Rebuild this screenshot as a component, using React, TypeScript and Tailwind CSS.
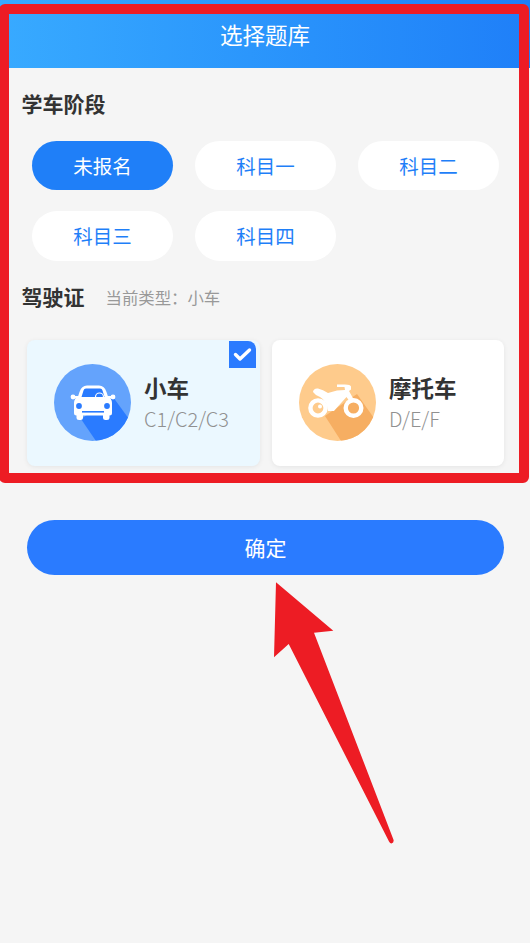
const CJK = 'font-["Noto_Sans_CJK_SC","Noto_Sans",sans-serif]'

const stages = ['未报名', '科目一', '科目二', '科目三', '科目四']

function CarIcon() {
  return (
    <svg width="77" height="77" viewBox="0 0 77 77" className="shrink-0 mb-[2px]">
      <defs>
        <clipPath id="car-clip">
          <circle cx="38.5" cy="38.5" r="38.5" />
        </clipPath>
      </defs>
      <circle cx="38.5" cy="38.5" r="38.5" fill="#64a3fc" />
      <polygon points="59,33 80,62 60,90 44,80 27,55" fill="#2a7bff" clipPath="url(#car-clip)" />
      {/* car */}
      <path
        d="M25.5 28 Q27.5 21.5 33 21.5 H45 Q50.5 21.5 52.5 28 L54 32.5 Q58 34.5 58 39 V49 Q58 51.5 55.5 51.5 V54 Q55.5 56 53 56 H51.5 Q49 56 49 54 V51.5 H29 V54 Q29 56 26.5 56 H25 Q22.5 56 22.5 54 V51.5 Q20 51.5 20 49 V39 Q20 34.5 24 32.5 Z"
        fill="#fff"
      />
      <circle cx="19" cy="33" r="2.4" fill="#fff" />
      <circle cx="59" cy="33" r="2.4" fill="#fff" />
      <rect x="19" y="32" width="6" height="2.5" fill="#fff" />
      <rect x="53" y="32" width="6" height="2.5" fill="#fff" />
      <path d="M29.5 26.5 Q30 24.5 32 24.5 H46 Q48 24.5 48.5 26.5 L50.5 33 H27.5 Z" fill="#2a7bff" />
      <path d="M41.5 33 a4 4 0 0 1 8 0" fill="none" stroke="#fff" strokeWidth="1.2" />
      <circle cx="25" cy="42" r="2.9" fill="#2a7bff" />
      <circle cx="53" cy="42" r="2.9" fill="#2a7bff" />
      <rect x="28" y="47" width="22" height="1.6" fill="#2a7bff" />
    </svg>
  )
}

function MotoIcon() {
  return (
    <svg width="77" height="77" viewBox="0 0 77 77" className="shrink-0 mb-[2px]">
      <defs>
        <clipPath id="moto-clip">
          <circle cx="38.5" cy="38.5" r="38.5" />
        </clipPath>
      </defs>
      <circle cx="38.5" cy="38.5" r="38.5" fill="#fecb8c" />
      <polygon points="58,30 82,64 60,90 44,80 26,52" fill="#f6ae62" clipPath="url(#moto-clip)" />
      {/* bike */}
      <path
        d="M14 28 Q14.5 24 19 24.5 Q24 25.5 29 29 L38 26.5 L46 26 L45.5 23 H38 V20.5 H46 Q51.5 20.5 52 22.5 V25.5 L50 27 L55 36 L51 38 L47.5 33 Q42 39 35 47 H29 Q28 37 21 33 Q16 31 14 28 Z"
        fill="#fff"
      />
      <circle cx="19" cy="44" r="7.6" fill="none" stroke="#fff" strokeWidth="4.4" />
      <circle cx="21" cy="42.5" r="2" fill="#fff" />
      <circle cx="54.5" cy="44" r="7.8" fill="none" stroke="#fff" strokeWidth="4.4" />
      <circle cx="54.5" cy="43" r="2.4" fill="#f6ae62" />
    </svg>
  )
}

function LicenseCard({
  name,
  code,
  icon,
  active,
  className,
}: {
  name: string
  code: string
  icon: React.ReactNode
  active?: boolean
  className: string
}) {
  return (
    <div
      className={`relative h-[126px] flex items-center rounded-lg shadow-[0_1px_5px_rgba(0,0,0,0.07)] ${
        active ? 'bg-[#ebf8ff]' : 'bg-white'
      } ${className}`}
    >
      {icon}
      <div className="ml-[13px] mb-[3px] flex flex-col">
        <span className="text-[22.5px] leading-[32px] font-bold text-[#333]">{name}</span>
        <span className="text-[20px] leading-[28px] mt-[2px] text-[#909090] font-light">{code}</span>
      </div>
      {active && (
        <div className="absolute right-[4px] top-[1px] w-[27px] h-[27px] bg-[#2a7bff] rounded-tr-lg flex items-center justify-center">
          <svg width="19" height="15" viewBox="0 0 19 15">
            <path d="M2.5 7.5 L7 12 L16.5 3" fill="none" stroke="#fff" strokeWidth="3.4" strokeLinecap="round" strokeLinejoin="round" />
          </svg>
        </div>
      )}
    </div>
  )
}

export default function App() {
  return (
    <div className={`relative w-[530px] h-[943px] overflow-hidden bg-[#f5f5f5] ${CJK}`}>
      <div className="h-[68px] pt-[18.5px] bg-gradient-to-r from-[#38aaff] to-[#1f7ff8] text-center text-[22.5px] leading-[30px] text-white">
        选择题库
      </div>

      <div className="pl-[21.5px] pt-[19px] text-[21px] leading-[32px] font-bold text-[#333]">学车阶段</div>

      <div className="mt-[22px] px-[32px] grid grid-cols-[141px_141px_141px] grid-rows-[49px_50px] gap-x-[22px] gap-y-[21px]">
        {stages.map((s, i) => (
          <button
            key={s}
            className={`rounded-full text-[19.5px] ${
              i === 0 ? 'bg-[#1f7ff8] text-white' : 'bg-white text-[#1f7ff8]'
            }`}
          >
            {s}
          </button>
        ))}
      </div>

      <div className="mt-[20px] pl-[21.5px] flex items-center h-[32px]">
        <span className="text-[21px] font-bold text-[#333]">驾驶证</span>
        <span className="ml-[21px] text-[16.4px] text-[#999]">当前类型：小车</span>
      </div>

      <div className="mt-[27px] pl-[27px] flex gap-[12px]">
        <LicenseCard name="小车" code="C1/C2/C3" icon={<CarIcon />} active className="w-[233px] pl-[27px]" />
        <LicenseCard name="摩托车" code="D/E/F" icon={<MotoIcon />} className="w-[232px] pl-[27px]" />
      </div>

      <div className="mt-[54px] pl-[27px] pr-[26px]">
        <button className="w-full h-[55px] rounded-full bg-[#2a7bff] text-white text-[21px]">确定</button>
      </div>

      {/* red annotation box */}
      <div className="absolute left-[-1px] top-[4px] w-[530px] h-[479px] border-[10px] border-[#ed1c24] rounded-[6px] pointer-events-none" />

      {/* red annotation arrow */}
      <svg className="absolute left-0 top-0 pointer-events-none" width="530" height="943">
        <path
          d="M276 582.3 L333.3 630.7 L314 632.7 L393.6 840 Q394 843 391.5 843.5 Q390 843.5 389 841.5 L288.7 644 L274 657.3 Z"
          fill="#ed1c24"
        />
      </svg>
    </div>
  )
}
